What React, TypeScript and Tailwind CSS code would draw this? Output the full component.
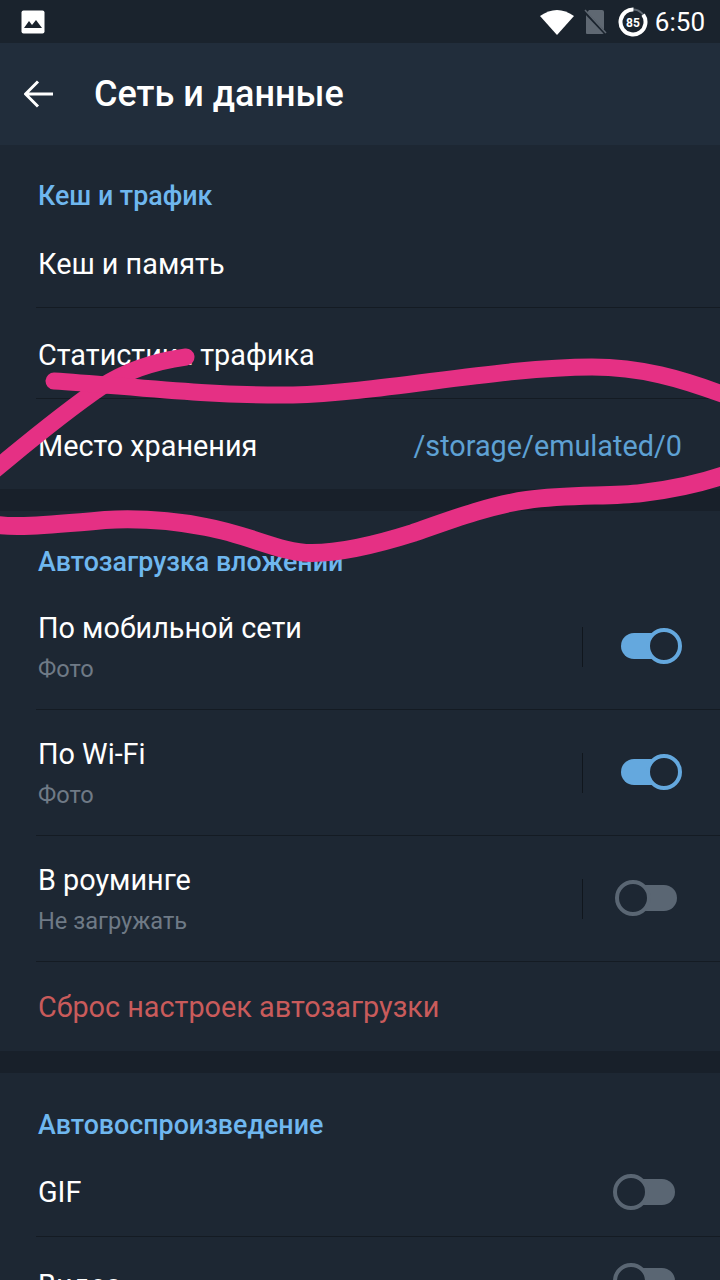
import React from "react";

function Toggle({ on }: { on: boolean }) {
  return (
    <div className="relative w-[62px] h-[36px]">
      <div className={on ? "absolute left-[1px] top-[5px] w-[56px] h-[26px] rounded-full bg-[#64a8de]" : "absolute left-[5px] top-[5px] w-[57px] h-[26px] rounded-full bg-[#5a6673]"} />
      <div className={on ? "absolute right-0 top-0 w-[36px] h-[36px] rounded-full bg-[#1d2733] border-[4px] border-[#64a8de]" : "absolute left-0 top-0 w-[36px] h-[36px] rounded-full bg-[#1d2733] border-[4px] border-[#5a6673]"} />
    </div>
  );
}

function Divider() {
  return <div className="ml-[36px] h-[1px] bg-[#141b23]" />;
}

function Header({ children, cls }: { children: string; cls: string }) {
  return <div className={`pl-[38px] text-[26.8px] leading-[32px] font-medium text-[#6fb7ef] ${cls}`}>{children}</div>;
}

function SwitchRow({ title, sub, on }: { title: string; sub: string; on: boolean }) {
  return (
    <div className="h-[125px] flex items-start pl-[38px] pr-[38px]">
      <div className="flex-1 pt-[26px]">
        <div className="text-[28.8px] leading-[36px] text-white">{title}</div>
        <div className="text-[23.6px] leading-[30px] mt-[8px] text-[#6f7a86]">{sub}</div>
      </div>
      <div className="w-[1px] h-[40px] mt-[43px] bg-[#10161d] mr-[37px]" />
      <div className={on ? "mt-[44px]" : "mt-[44px] -ml-[5px] mr-[5px]"}>
        <Toggle on={on} />
      </div>
    </div>
  );
}

export default function App() {
  return (
    <div className="relative w-[720px] h-[1280px] overflow-hidden bg-[#1d2733] font-['Roboto',sans-serif]">
      <div className="h-[43px] bg-[#1a232d] flex items-center pl-[21px] pr-[15px]">
        <svg width="24" height="24" viewBox="0 0 24 24">
          <rect x="0.5" y="0.5" width="23" height="23" rx="2" fill="#fff" />
          <path d="M3 18 L8 11 L11 15 L15 10 L21 18 Z" fill="#1a232d" />
        </svg>
        <div className="flex-1" />
        <svg width="36" height="26" viewBox="0 0 36 26" className="mr-[8px]">
          <path d="M1 7 Q18 -5 35 7 L18 26 Z" fill="#fff" />
        </svg>
        <svg width="24" height="26" viewBox="0 0 24 26" className="mr-[11px]">
          <path d="M6 1 H19 Q21 1 21 3 V24 Q21 25 19 25 H4 Q3 25 3 24 V5 Z" fill="#5f6872" />
          <path d="M1 2 L23 25" stroke="#1a232d" strokeWidth="3" />
          <path d="M2 1 L23 24" stroke="#5f6872" strokeWidth="1.5" />
        </svg>
        <svg width="30" height="30" viewBox="0 0 30 30" className="mr-[7px]">
          <circle cx="15" cy="15" r="12.5" fill="none" stroke="#5f6872" strokeWidth="2" />
          <circle cx="15" cy="15" r="12.5" fill="none" stroke="#fff" strokeWidth="4" strokeDasharray="66.8 11.8" transform="rotate(-36 15 15)" />
          <text x="15" y="19.5" textAnchor="middle" fontSize="12" fontWeight="700" fill="#fff" fontFamily="Roboto">85</text>
        </svg>
        <span className="text-[26px] leading-[32px] text-white">6:50</span>
      </div>
      <div className="h-[102px] bg-[#212d3b] flex items-center pl-[24px]">
        <svg width="30" height="30" viewBox="0 0 30 30" className="mr-[40px]">
          <path d="M29 15 H2 M14 2.5 L1.5 15 L14 27.5" fill="none" stroke="#fff" strokeWidth="3" />
        </svg>
        <span className="text-[36px] leading-[40px] font-medium text-white">Сеть и данные</span>
      </div>
      <Header cls="pt-[35px]">Кеш и трафик</Header>
      <div className="pl-[38px] pt-[34px] h-[95px] text-[28.8px] leading-[36px] text-white">Кеш и память</div>
      <Divider />
      <div className="pl-[38px] pt-[29px] h-[90px] text-[28.8px] leading-[36px] text-white">Статистика трафика</div>
      <Divider />
      <div className="px-[38px] pt-[29px] h-[90px] flex justify-between text-[28.8px] leading-[36px] text-white">
        <span>Место хранения</span>
        <span className="text-[#5ea1d4]">/storage/emulated/0</span>
      </div>
      <div className="h-[22px] bg-[#18202a]" />
      <Header cls="pt-[35px] pb-[6px]">Автозагрузка вложений</Header>
      <SwitchRow title="По мобильной сети" sub="Фото" on />
      <Divider />
      <SwitchRow title="По Wi-Fi" sub="Фото" on />
      <Divider />
      <SwitchRow title="В роуминге" sub="Не загружать" on={false} />
      <Divider />
      <div className="pl-[38px] pt-[27px] h-[89px] text-[28.8px] leading-[36px] text-[#c95b5b]">Сброс настроек автозагрузки</div>
      <div className="h-[22px] bg-[#18202a]" />
      <Header cls="pt-[36px]">Автовоспроизведение</Header>
      <div className="flex items-start justify-between pl-[38px] pr-[45px] h-[95px] pt-[33px]">
        <span className="text-[28.8px] leading-[36px] text-white">GIF</span>
        <Toggle on={false} />
      </div>
      <Divider />
      <div className="flex items-start justify-between pl-[38px] pr-[45px] pt-[30px]">
        <span className="text-[28.8px] leading-[36px] text-white">Видео</span>
        <div className="-mt-[4px]">
          <Toggle on={false} />
        </div>
      </div>
      <svg className="absolute left-0 top-0 pointer-events-none" width="720" height="1280" viewBox="0 0 720 1280">
        <path d="M186 357 C150 362 125 372 101 387 C60 415 25 445 -8 472" fill="none" stroke="#e53084" strokeWidth="17" strokeLinecap="round" />
        <path d="M54 381 C120 385 200 396 293 395 C380 393 500 367 592 367 C640 367 680 378 730 397" fill="none" stroke="#e53084" strokeWidth="17" strokeLinecap="round" />
        <path d="M-8 524 C10 528 40 526 105 520 C140 518 175 521 206 527 C250 535 280 553 312 553 C340 553 375 545 413 533 C450 520 490 505 527 500 C570 494 610 497 642 493 C675 489 700 484 730 473" fill="none" stroke="#e53084" strokeWidth="18" strokeLinecap="round" />
      </svg>
    </div>
  );
}
